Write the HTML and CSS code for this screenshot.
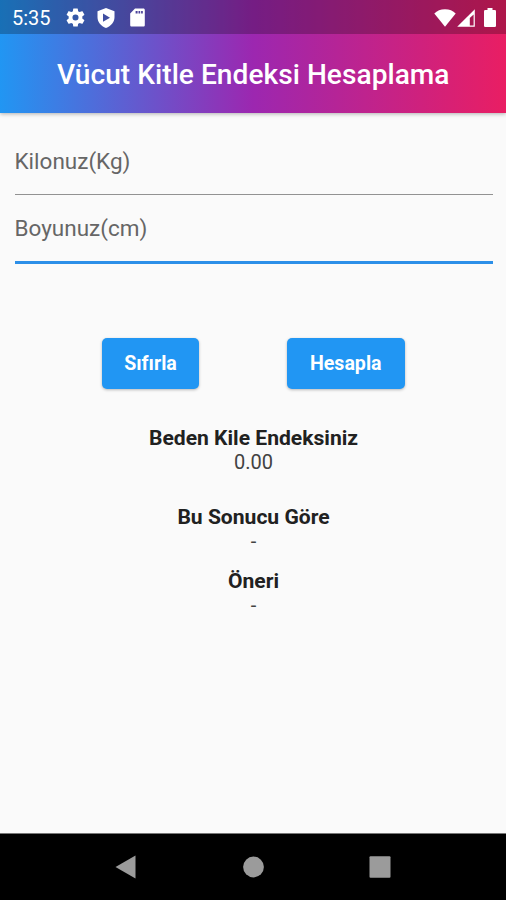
FILE: index.html
```html
<!DOCTYPE html>
<html lang="tr">
<head>
<meta charset="utf-8">
<title>Vücut Kitle Endeksi Hesaplama</title>
<link rel="stylesheet" href="styles.css">
</head>
<body>
<div class="screen">
  <header class="top">
    <div class="status">
      <span class="clock">5:35</span>
      <svg class="icon gear" viewBox="2 2 20 20"><path fill-rule="evenodd" d="M19.14 12.94c.04-.3.06-.61.06-.94 0-.32-.02-.64-.07-.94l2.03-1.58a.49.49 0 0 0 .12-.61l-1.92-3.32a.49.49 0 0 0-.59-.22l-2.39.96a7 7 0 0 0-1.62-.94l-.36-2.54a.48.48 0 0 0-.48-.41h-3.84a.48.48 0 0 0-.47.41l-.36 2.54a7.3 7.3 0 0 0-1.63.94l-2.39-.96a.48.48 0 0 0-.59.22L2.74 8.87a.48.48 0 0 0 .12.61l2.03 1.58a6 6 0 0 0-.02 1.88l-2.03 1.58a.49.49 0 0 0-.12.61l1.92 3.32c.12.22.37.29.59.22l2.39-.96c.5.38 1.03.7 1.62.94l.36 2.54c.05.24.24.41.48.41h3.84c.24 0 .44-.17.47-.41l.36-2.54a7.3 7.3 0 0 0 1.62-.94l2.39.96c.22.08.47 0 .59-.22l1.92-3.32a.48.48 0 0 0-.12-.61zM12 15.200a3.200 3.200 0 1 1 0-6.400 3.200 3.200 0 0 1 0 6.400z"/></svg>
      <svg class="icon shield" viewBox="0 0 18 20"><path fill-rule="evenodd" d="M9 0 .5 3.2v6.1c0 4.900 3.500 8.800 8.500 10.700 5-1.900 8.500-5.800 8.500-10.700V3.200zM6 5.600 13 9.700 6 13.800z"/></svg>
      <svg class="icon card" viewBox="0 0 15 19"><path fill-rule="evenodd" d="M5 .5h8.300c1 0 1.500.6 1.500 1.500v15c0 1-.5 1.500-1.500 1.500H1.700c-1 0-1.500-.5-1.500-1.500V5.500zM5.600 3v2.500h2V3zm2.900 0v2.500h1.700V3zm2.600 0v2.500h1.700V3z"/></svg>
      <svg class="icon wifi" viewBox="0 0 22 18"><path d="M11 17.700.3 4.500C3 1.800 6.500.3 11 .3s8 1.500 10.700 4.200z"/></svg>
      <svg class="icon signal" viewBox="0 0 18 18"><path fill-rule="evenodd" d="M17.800.2v17.600H.2zM16.600 5.500 12.800 9v7.500h3.800z"/></svg>
      <svg class="icon battery" viewBox="0 0 12 19"><rect x="3.500" y="0" width="5" height="4"/><rect x="0" y="2" width="12" height="17" rx="1.300"/></svg>
    </div>
    <h1 class="title">Vücut Kitle Endeksi Hesaplama</h1>
  </header>
  <main class="content">
    <div class="field">Kilonuz(Kg)</div>
    <div class="field field-active">Boyunuz(cm)</div>
    <div class="actions">
      <button class="btn btn-reset">Sıfırla</button>
      <button class="btn btn-calc">Hesapla</button>
    </div>
    <section class="result result-index"><h2>Beden Kile Endeksiniz</h2><p>0.00</p></section>
    <section class="result result-state"><h2>Bu Sonucu Göre</h2><p>-</p></section>
    <section class="result"><h2>Öneri</h2><p>-</p></section>
  </main>
  <nav class="nav">
    <svg viewBox="0 0 24 24"><path d="M1.500 12 21.500.500v23z"/></svg>
    <svg viewBox="0 0 24 24"><circle cx="12.500" cy="12" r="10.400"/></svg>
    <svg viewBox="0 0 24 24"><rect x="1.500" y="1.300" width="21" height="21.500" rx="1"/></svg>
  </nav>
</div>
</body>
</html>
```
FILE: styles.css
```css
* { box-sizing: border-box; }
body { margin: 0; font-family: Roboto, sans-serif; background: #fafafa; }
h1, h2, p { margin: 0; }
.screen { width: 506px; height: 900px; display: flex; flex-direction: column; overflow: hidden; }
.top {
  height: 113px;
  flex: none;
  background: linear-gradient(90deg, #2196f3, #9c27b0 50%, #e91e63);
  box-shadow: 0 1px 4px rgba(0, 0, 0, .3);
  color: #fff;
}
.status { height: 34px; display: flex; align-items: center; padding: 1px 10px 0 12px; background: rgba(0, 0, 0, .25); }
.clock { width: 54px; font-size: 20px; line-height: 24px; padding-top: 1px; }
.icon { fill: #fff; flex: none; }
.gear { width: 19px; height: 19px; }
.shield { width: 18px; height: 20px; margin-left: 12px; }
.card { width: 15px; height: 19px; margin-left: 15px; }
.wifi { width: 22px; height: 18px; margin-left: auto; }
.signal { width: 18px; height: 18px; margin-left: 1px; }
.battery { width: 12px; height: 19px; margin-left: 9px; }
.title { height: 79px; padding-left: 57px; font-size: 28.100px; line-height: 82px; font-weight: 500; letter-spacing: .04px; white-space: nowrap; }
.content { flex: 1; padding: 15px 13px 0 15px; }
.field { height: 67px; padding-top: 18px; font-size: 22.500px; line-height: 30px; color: #666; border-bottom: 1px solid #929292; text-indent: -.5px; }
.field-active { height: 69px; border-bottom: 3px solid #2c8fe8; }
.actions { display: flex; gap: 88px; padding: 74px 0 0 87px; }
.btn { height: 51px; padding: 0; border: 0; border-radius: 5px; background: #2196f3; color: #fff; font: 700 19.600px Roboto, sans-serif; box-shadow: 0 1px 3px rgba(0, 0, 0, .27); }
.btn-reset { width: 97px; }
.btn-calc { width: 117.500px; }
.result { text-align: center; font-size: 20px; line-height: 24px; color: #424242; height: 64.500px; margin-right: 1px; }
.result h2 { font-size: 21.080px; line-height: 24px; font-weight: 700; color: #212121; }
.result-index { margin-top: 37px; height: 78.500px; }
.nav { height: 67px; background: #000; border-top: 1px solid #777; display: flex; justify-content: center; gap: 103px; align-items: center; }
.nav svg { width: 24px; height: 24px; fill: #9b9b9b; }
```
